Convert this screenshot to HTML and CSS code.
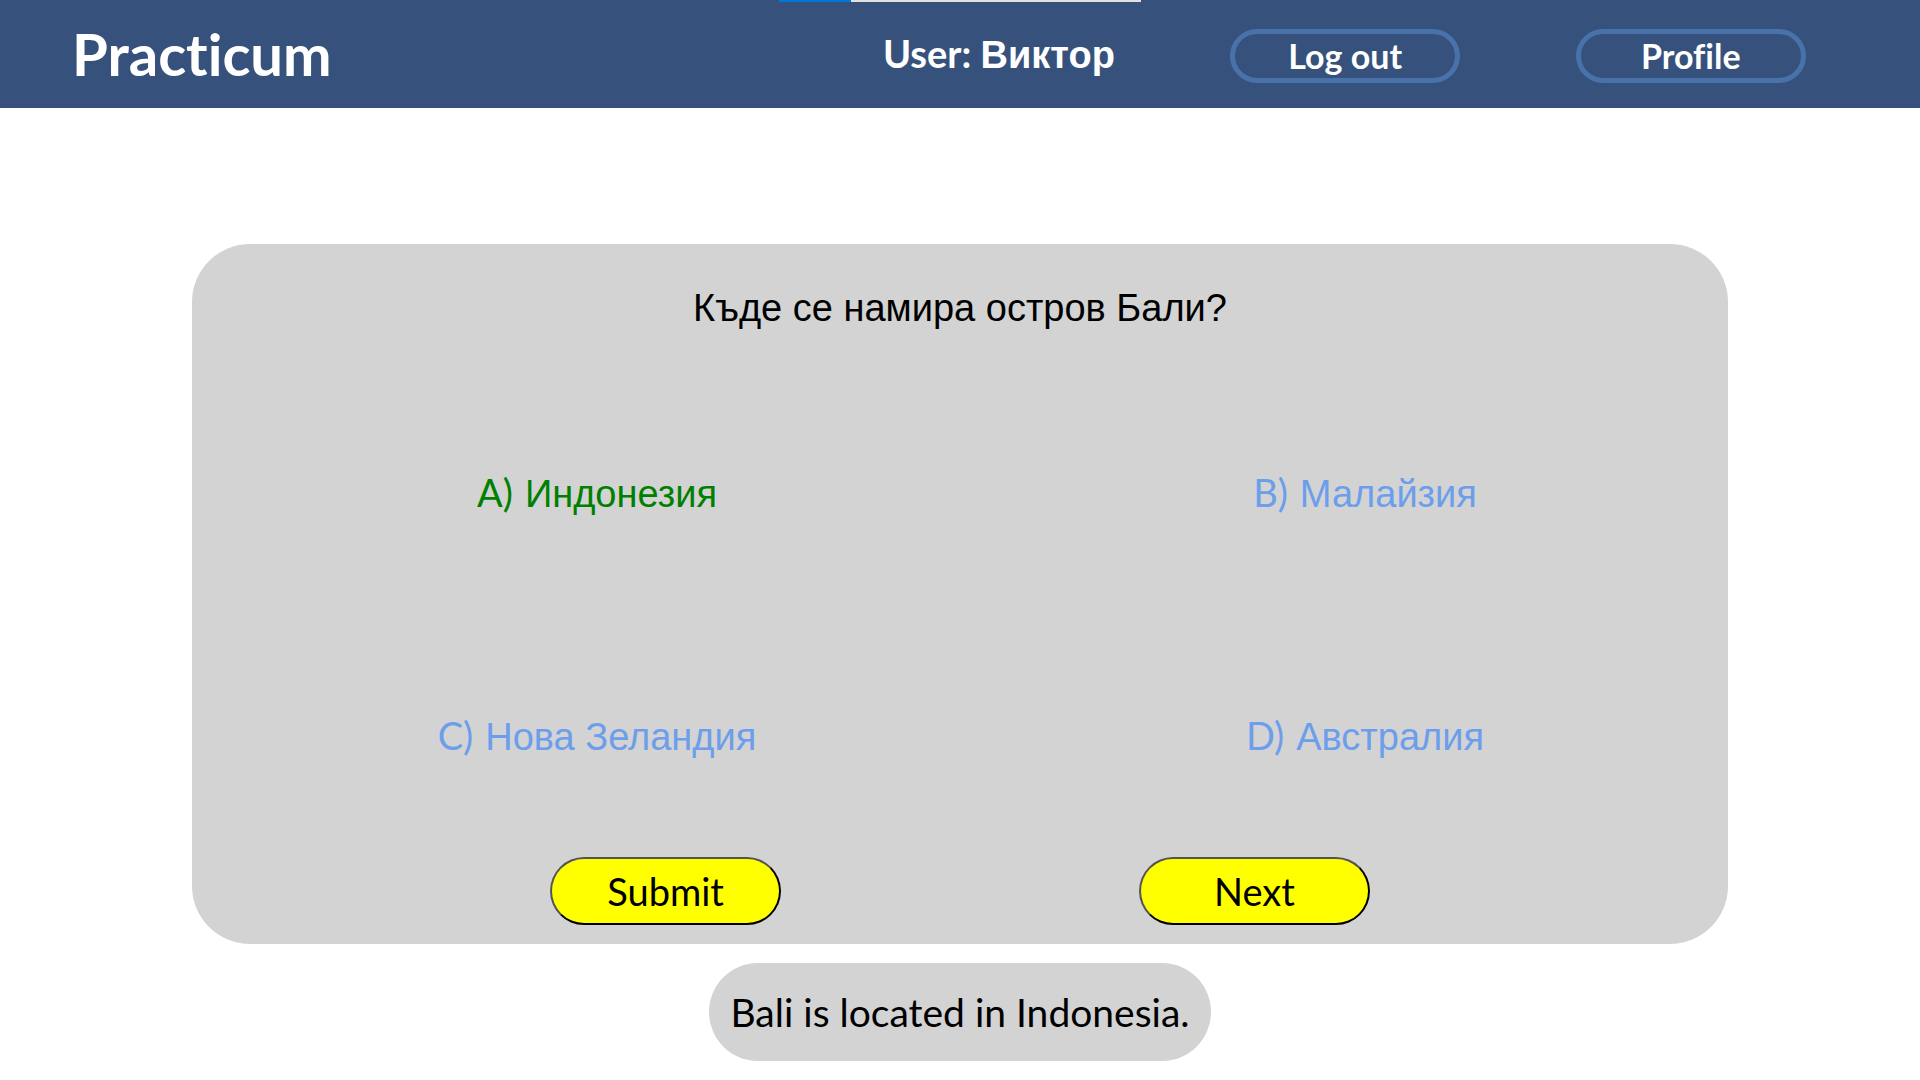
FILE: index.html
```html
<!DOCTYPE html>
<html lang="bg">
<head>
<meta charset="utf-8">
<meta name="viewport" content="width=device-width, initial-scale=1">
<title>Practicum</title>
<link rel="stylesheet" href="styles.css">
</head>
<body>
<header class="topbar">
  <progress class="loader" value="20" max="100" aria-label="Loading"></progress>
  <h1 class="brand">Practicum</h1>
  <p class="user">User: <span class="cyr">Виктор</span></p>
  <button class="nav-button" type="button">Log out</button>
  <button class="nav-button" type="button">Profile</button>
</header>
<main class="page">
  <form class="card">
    <h2 class="question cyr">Къде се намира остров Бали?</h2>
    <div class="answers" role="radiogroup" aria-label="Answers">
      <label class="answer correct"><input class="pick" type="radio" name="answer" checked><span><span class="letter">A)</span><span class="cyr">Индонезия</span></span></label>
      <label class="answer"><input class="pick" type="radio" name="answer"><span><span class="letter">B)</span><span class="cyr">Малайзия</span></span></label>
      <label class="answer"><input class="pick" type="radio" name="answer"><span><span class="letter">C)</span><span class="cyr">Нова Зеландия</span></span></label>
      <label class="answer"><input class="pick" type="radio" name="answer"><span><span class="letter">D)</span><span class="cyr">Австралия</span></span></label>
    </div>
    <div class="actions">
      <button class="action" type="button">Submit</button>
      <button class="action" type="button">Next</button>
    </div>
  </form>
  <p class="explanation">Bali is located in Indonesia.</p>
</main>
</body>
</html>
```
FILE: styles.css
```css
* {
  box-sizing: border-box;
}

body {
  margin: 0;
  background: #fff;
  color: #000;
  font-family: Lato, "Liberation Sans", sans-serif;
  font-size: 38px;
  font-variant-ligatures: none;
  line-height: 44px;
}

button {
  font: inherit;
  font-variant-ligatures: none;
}

.cyr {
  font-family: "Liberation Sans", sans-serif;
}

.topbar {
  position: relative;
  display: flex;
  align-items: center;
  min-height: 108px;
  padding: 0 114px 0 72px;
  background: #36527c;
  color: #fff;
  font-weight: 700;
}

.loader {
  position: absolute;
  top: 0;
  left: 779px;
  width: 362px;
  height: 2px;
  border: 0;
  appearance: none;
  background: #e1e1e1;
}

.loader::-webkit-progress-bar {
  background: #e1e1e1;
}

.loader::-webkit-progress-value {
  background: #0078d7;
}

.brand {
  margin: 0 auto 0 0;
  font-size: 58px;
  line-height: 68px;
}

.user {
  margin: 0;
}

.nav-button {
  width: 12vw;
  height: 54px;
  margin: 4px 0 0 6vw;
  padding: 0;
  border: 5px solid #4a72aa;
  border-radius: 27px;
  background: transparent;
  color: #fff;
  font-size: 34px;
  line-height: 44px;
}

.page {
  display: flex;
  flex-direction: column;
  align-items: center;
  gap: 19px;
  padding: 136px 10% 19px;
}

.card {
  display: flex;
  flex-direction: column;
  width: 100%;
  min-height: 700px;
  padding: 42px 0 19px;
  border-radius: 58px;
  background: #d3d3d3;
}

.question {
  margin: 0 0 42px;
  font-size: 38px;
  font-weight: 400;
  text-align: center;
}

.answers {
  display: grid;
  flex: 1;
  grid-template-columns: 1fr 1fr;
  grid-auto-rows: 1fr;
}

.answer {
  display: flex;
  align-items: center;
  justify-content: center;
  color: #6c9eeb;
}

.correct {
  color: #008000;
}

.pick {
  width: 42px;
  height: 42px;
  margin: 0;
  appearance: none;
}

.letter {
  margin-right: 12px;
}

.actions {
  display: flex;
  justify-content: space-evenly;
}

.action {
  width: 12vw;
  height: 68px;
  padding: 0;
  border: 2px outset #000;
  border-radius: 34px;
  background: #ff0;
  color: #000;
}

.explanation {
  margin: 0;
  padding: 27px 21px;
  border-radius: 49px;
  background: #d3d3d3;
  font-size: 39px;
}
```
